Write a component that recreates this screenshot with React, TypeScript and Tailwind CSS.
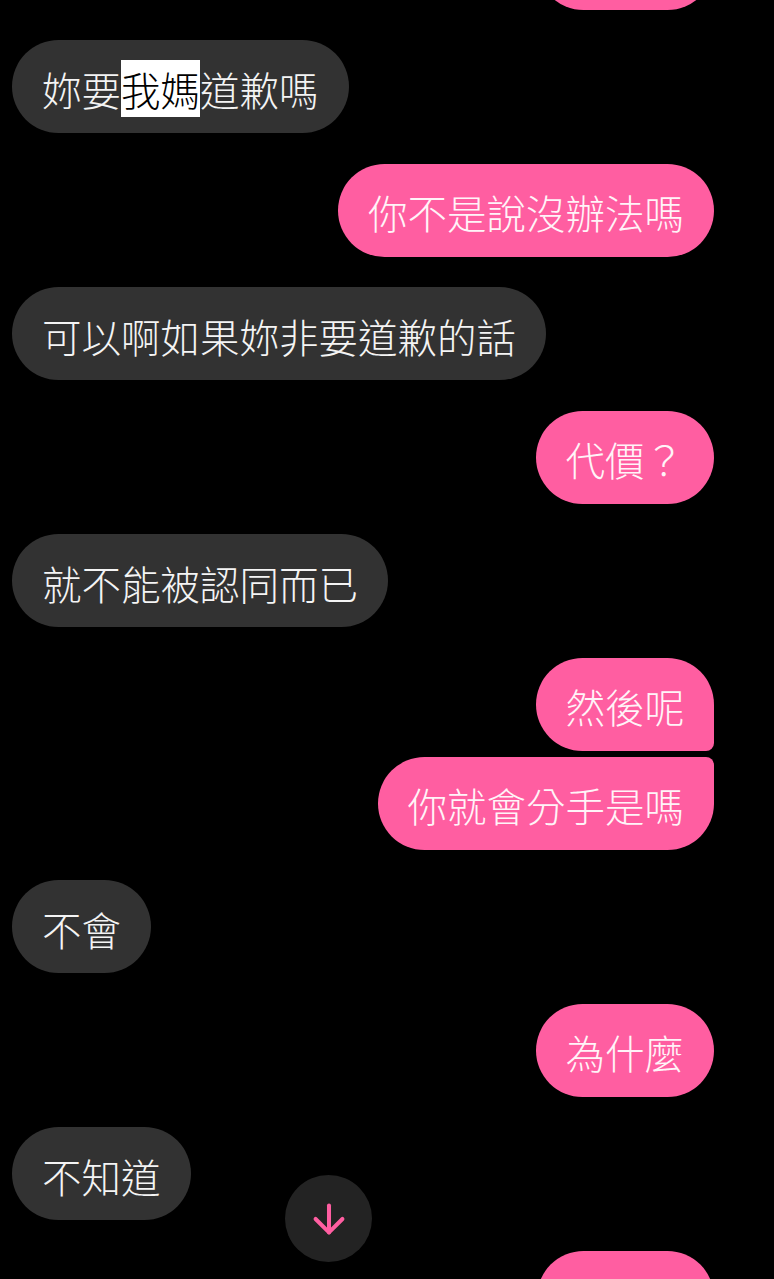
import { ArrowDown } from 'lucide-react';

type Msg = { id: number; text?: React.ReactNode; me: boolean; grouped?: 'top' | 'bottom' };

export default function App() {
  // first and last bubbles are only partly on screen, their text is off-screen
  const messages: Msg[] = [
    { id: 0, me: true },
    {
      id: 1,
      me: false,
      text: (
        <>
          妳要<span className="bg-white text-black">我媽</span>道歉嗎
        </>
      ),
    },
    { id: 2, text: '你不是說沒辦法嗎', me: true },
    { id: 3, text: '可以啊如果妳非要道歉的話', me: false },
    { id: 4, text: '代價？', me: true },
    { id: 5, text: '就不能被認同而已', me: false },
    { id: 6, text: '然後呢', me: true, grouped: 'top' },
    { id: 7, text: '你就會分手是嗎', me: true, grouped: 'bottom' },
    { id: 8, text: '不會', me: false },
    { id: 9, text: '為什麼', me: true },
    { id: 10, text: '不知道', me: false },
    { id: 11, me: true },
  ];

  return (
    <div
      className="relative h-[1279px] w-[774px] overflow-hidden bg-black"
      style={{ fontFamily: '"Noto Sans CJK TC", "Noto Sans", sans-serif' }}
    >
      <div className="flex flex-col pl-[12px] pr-[60px] -mt-[83.5px]">
        {messages.map((m, i) => {
          const gap = i === 0 ? '' : m.grouped === 'bottom' ? 'mt-[6px]' : 'mt-[30.5px]';
          const corners =
            m.grouped === 'top'
              ? 'rounded-[46.5px] rounded-br-[8px]'
              : m.grouped === 'bottom'
              ? 'rounded-[46.5px] rounded-tr-[8px]'
              : 'rounded-[46.5px]';
          return (
            <div key={m.id} className={`flex ${m.me ? 'justify-end' : 'justify-start'} ${gap}`}>
              <div
                className={`flex h-[93px] items-center px-[30px] text-[39.5px] font-light leading-none whitespace-nowrap ${corners} ${
                  m.text ? '' : 'w-[177px]'
                } ${m.me ? 'bg-[#ff5ea1] text-[#fff4f8]' : 'bg-[#323232] text-[#f4f4f4]'}`}
              >
                {m.text && <span className="pt-[4px]">{m.text}</span>}
              </div>
            </div>
          );
        })}
      </div>

      {/* scroll to bottom */}
      <div className="absolute left-[285px] top-[1175px] flex h-[87px] w-[87px] items-center justify-center rounded-full bg-[#232323]">
        <ArrowDown size={46} strokeWidth={2.1} color="#ff5ea1" />
      </div>
    </div>
  );
}
